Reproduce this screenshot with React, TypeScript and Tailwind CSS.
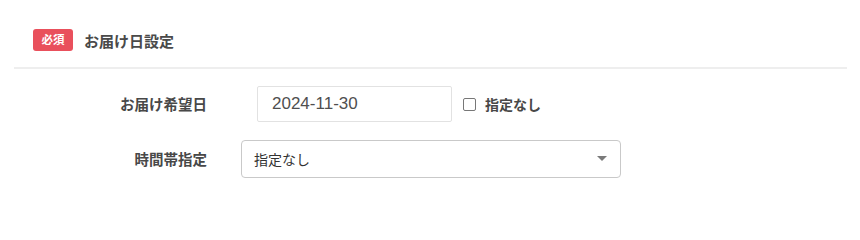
import React from "react";

const jp = { fontFamily: '"Noto Sans CJK JP", "Noto Sans", sans-serif' };

export default function App() {
  return (
    <div className="w-[860px] h-[213px] bg-white overflow-hidden" style={jp}>
      <div className="flex items-center pl-[33px] pt-[29px] h-[51px]">
        <span className="flex items-center justify-center w-[40px] h-[22px] rounded-[3px] bg-[#e9505c] text-white text-[11.5px] font-bold leading-none">
          必須
        </span>
        <span className="ml-[11px] text-[15px] font-bold text-[#4a4a4a] leading-none">
          お届け日設定
        </span>
      </div>
      <div className="ml-[14px] mt-[16px] w-[833px] h-[2px] bg-[#eeeeee]" />
      <div className="flex items-center mt-[17px] h-[36px]">
        <div className="w-[207px] text-right text-[14.5px] font-bold text-[#484848] leading-none">
          お届け希望日
        </div>
        <div className="ml-[50px] w-[195px] h-[36px] border border-[#e2e2e2] rounded-[2px] flex items-center pl-[14px] text-[17px] text-[#4f4f4f]" style={{ fontFamily: '"Liberation Sans", Arial, sans-serif' }}>
          2024-11-30
        </div>
        <div className="ml-[11px] w-[13px] h-[13px] border border-[#777777] rounded-[2px] bg-white" />
        <span className="ml-[9px] text-[14px] font-bold text-[#484848] leading-none">指定なし</span>
      </div>
      <div className="flex items-center mt-[18px] h-[38px]">
        <div className="w-[207px] text-right text-[14.5px] font-bold text-[#484848] leading-none">
          時間帯指定
        </div>
        <div className="ml-[34px] w-[380px] h-[38px] border border-[#c9c9c9] rounded-[4px] flex items-center justify-between pl-[12px] pr-[13px]">
          <span className="text-[14px] text-[#333333] leading-none">指定なし</span>
          <svg width="10" height="6" viewBox="0 0 10 6">
            <path d="M0 0 L10 0 L5 5 Z" fill="#7a7a7a" />
          </svg>
        </div>
      </div>
    </div>
  );
}
